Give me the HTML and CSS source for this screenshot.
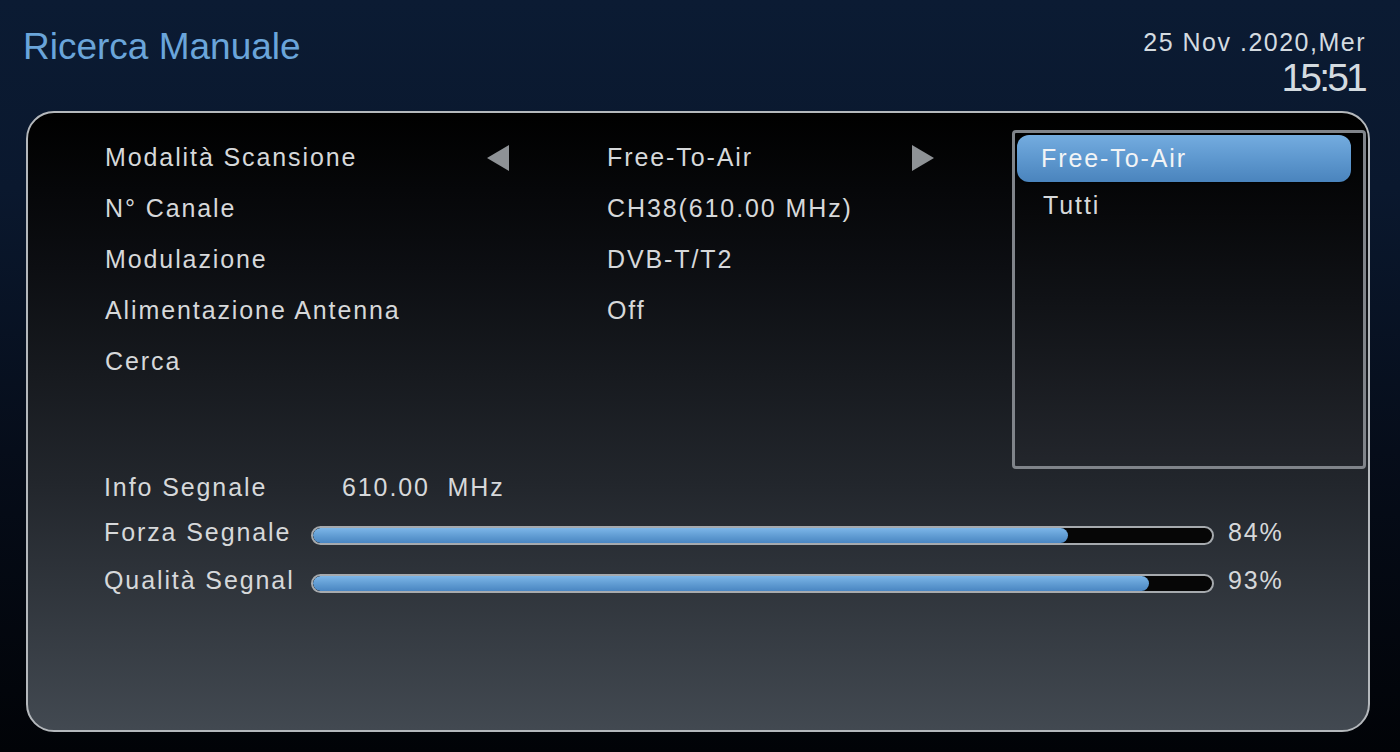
FILE: index.html
```html
<!DOCTYPE html>
<html lang="it">

<head>
    <meta charset="UTF-8">
    <meta name="viewport" content="width=device-width, initial-scale=1.0">
    <title>Ricerca Manuale</title>

    <link rel="stylesheet" href="styles.css">

</head>
<body>

    <div class="header">
        <h1 class="title">Ricerca Manuale</h1>
        <div class="clock">
            <div class="date">25 Nov .2020,Mer</div>
            <div class="time">15:51</div>
        </div>
    </div>

    <div class="panel">
        <div class="top">
            <div class="settings">
                <div class="label">Modalità Scansione</div>
                <div class="arrow">
                    <svg width="22" height="26" viewBox="0 0 22 26"><polygon points="22,0 22,26 0,13" fill="#8e9296"/></svg>
                </div>
                <div class="value">Free-To-Air</div>
                <div class="arrow">
                    <svg width="22" height="26" viewBox="0 0 22 26"><polygon points="0,0 0,26 22,13" fill="#8e9296"/></svg>
                </div>

                <div class="label">N° Canale</div>
                <div></div>
                <div class="value">CH38(610.00 MHz)</div>
                <div></div>

                <div class="label">Modulazione</div>
                <div></div>
                <div class="value">DVB-T/T2</div>
                <div></div>

                <div class="label">Alimentazione Antenna</div>
                <div></div>
                <div class="value">Off</div>
                <div></div>

                <div class="label">Cerca</div>
                <div></div>
                <div></div>
                <div></div>
            </div>

            <div class="listbox">
                <div class="option selected">Free-To-Air</div>
                <div class="option">Tutti</div>
            </div>
        </div>

        <div class="signal">
            <div class="sig-row">
                <div class="sig-label">Info Segnale</div>
                <div class="freq">610.00&nbsp;&nbsp;MHz</div>
            </div>
            <div class="sig-row">
                <div class="sig-label">Forza Segnale</div>
                <div class="bar"><div class="fill" style="width: 84%"></div></div>
                <div class="pct">84%</div>
            </div>
            <div class="sig-row">
                <div class="sig-label">Qualità Segnal</div>
                <div class="bar"><div class="fill" style="width: 93%"></div></div>
                <div class="pct">93%</div>
            </div>
        </div>
    </div>

</body>
</html>
```

FILE: styles.css
```css
body {
    margin: 0;
    width: 1400px;
    height: 752px;
    overflow: hidden;
    background: linear-gradient(180deg, #0b1b33 0%, #0a182e 25%, #060d1a 60%, #010307 100%);
    font-family: "Liberation Sans", Arial, sans-serif;
    color: #d6d8da;
}

.header {
    display: flex;
    justify-content: space-between;
    height: 111px;
    padding: 0 34px 0 23px;
}

.title {
    margin: 0;
    padding-top: 26px;
    font-size: 37px;
    font-weight: normal;
    color: #6aa5da;
}

.clock {
    display: flex;
    flex-direction: column;
    align-items: flex-end;
    padding-top: 27px;
    color: #d4dbe0;
}

.date {
    font-size: 25px;
    letter-spacing: 1.5px;
    line-height: 30px;
}

.time {
    font-size: 39px;
    letter-spacing: -2.8px;
    line-height: 42px;
    margin-right: 1px;
}

.panel {
    margin-left: 26px;
    width: 1340px;
    height: 617px;
    border: 2px solid #b4b8bc;
    border-radius: 28px;
    background: linear-gradient(180deg, #000000 0%, #0c0e12 25%, #22262c 60%, #424951 100%);
}

.top {
    display: flex;
    justify-content: space-between;
    padding-top: 17px;
    padding-right: 2px;
}

.settings {
    display: grid;
    grid-template-columns: 382px 120px 305px 30px;
    grid-auto-rows: 51px;
    align-items: center;
    padding-left: 77px;
    padding-top: 2px;
    font-size: 25px;
    letter-spacing: 1.9px;
}

.arrow {
    display: flex;
    align-items: center;
}

.listbox {
    width: 334px;
    height: 331px;
    border: 3px solid #80848a;
    border-radius: 4px;
    background: linear-gradient(180deg, #000000 0%, #101216 50%, #23262c 100%);
    padding: 2px 12px 0 2px;
}

.option {
    height: 47px;
    line-height: 47px;
    padding-left: 26px;
    font-size: 25px;
    letter-spacing: 1.9px;
}

.option.selected {
    padding-left: 24px;
    border-radius: 12px;
    color: #f2f4f6;
    background: linear-gradient(180deg, #74acdf 0%, #5e98cf 50%, #4a84bd 100%);
    box-shadow: 0 1px 2px rgba(0, 0, 0, 0.6);
}

.signal {
    padding-left: 76px;
    margin-top: -4px;
    font-size: 25px;
    letter-spacing: 1.9px;
}

.sig-row {
    display: flex;
    align-items: center;
    height: 45px;
}

.sig-row:nth-child(3) {
    height: 51px;
}

.sig-label {
    width: 207px;
}

.freq {
    margin-left: 31px;
}

.bar {
    width: 899px;
    height: 15px;
    margin-top: 6px;
    border: 2px solid #a6aaae;
    border-radius: 10px;
    background: #060606;
    overflow: hidden;
}

.fill {
    height: 100%;
    border-radius: 9px;
    background: linear-gradient(180deg, #7cb6e8 0%, #5f9bd2 55%, #4a86c2 100%);
}

.pct {
    margin-left: 14px;
}
```
